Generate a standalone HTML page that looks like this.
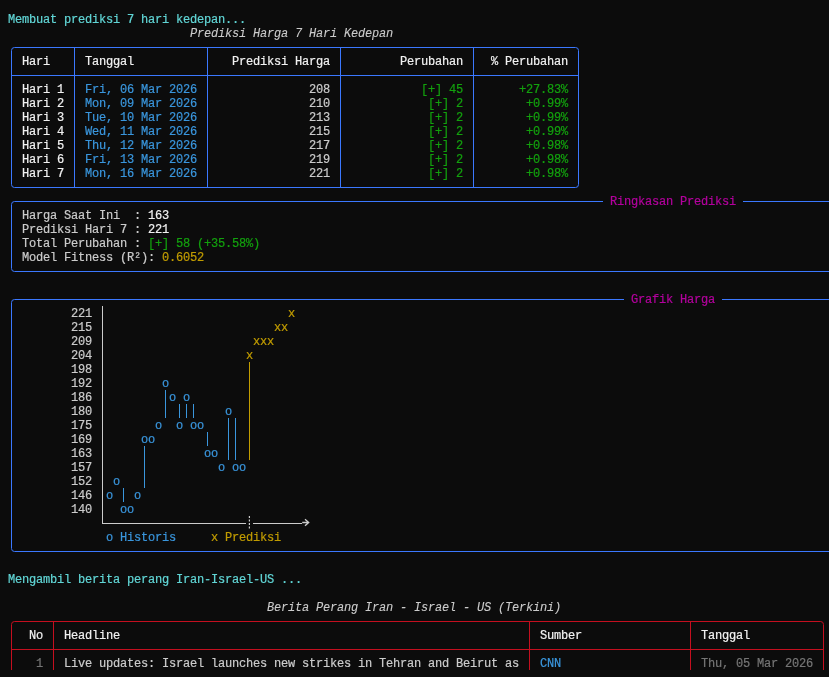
<!DOCTYPE html>
<html lang="id"><head><meta charset="utf-8"><title>Prediksi Harga</title>
<style>
html,body{margin:0;padding:0;background:#0c0c0c;}
body{width:829px;height:677px;overflow:hidden;position:relative;font-family:"Liberation Mono", "DejaVu Sans Mono", monospace;font-size:12.0px;line-height:14px;color:#cccccc;}
#term{position:absolute;left:0;top:0;width:829px;height:677px;overflow:hidden;background:#0c0c0c;}
#term svg{position:absolute;left:0;top:0;}
.r{position:absolute;left:0;height:14px;width:829px;white-space:pre;will-change:transform;}
.r span{position:absolute;top:1.0px;white-space:pre;letter-spacing:-0.2012px;-webkit-text-stroke:0.2px currentColor;}
.r span.b{font-weight:bold;-webkit-text-stroke:0;} .r span.i{font-style:italic;-webkit-text-stroke:0.1px currentColor;}
</style></head><body><div id="term">
<svg width="829" height="677" viewBox="0 0 829 677" shape-rendering="auto">

<path d="M14.5 47.5 H575.5 Q578.5 47.5 578.5 50.5 V184.5 Q578.5 187.5 575.5 187.5 H14.5 Q11.5 187.5 11.5 184.5 V50.5 Q11.5 47.5 14.5 47.5 Z" fill="none" stroke="#3b78ff" stroke-width="1"/>
<rect x="11" y="75" width="568" height="1" fill="#3b78ff"/>
<rect x="74" y="47" width="1" height="141" fill="#3b78ff"/>
<rect x="207" y="47" width="1" height="141" fill="#3b78ff"/>
<rect x="340" y="47" width="1" height="141" fill="#3b78ff"/>
<rect x="473" y="47" width="1" height="141" fill="#3b78ff"/>
<path d="M603 201.5 H14.5 Q11.5 201.5 11.5 204.5 V268.5 Q11.5 271.5 14.5 271.5 H840" fill="none" stroke="#3b78ff" stroke-width="1"/>
<rect x="743" y="201" width="97" height="1" fill="#3b78ff"/>
<path d="M624 299.5 H14.5 Q11.5 299.5 11.5 302.5 V548.5 Q11.5 551.5 14.5 551.5 H840" fill="none" stroke="#3b78ff" stroke-width="1"/>
<rect x="722" y="299" width="118" height="1" fill="#3b78ff"/>
<rect x="102" y="306" width="1" height="210" fill="#cccccc"/>
<rect x="102" y="516" width="1" height="8" fill="#cccccc"/>
<rect x="102" y="523" width="144" height="1" fill="#cccccc"/>
<rect x="253" y="523" width="49" height="1" fill="#cccccc"/>
<path d="M302.2 522.5 H308.5 M305 519.3 L308.7 522.5 L305 525.7" fill="none" stroke="#cccccc" stroke-width="1.3"/>
<path d="M249.4 516 V530" stroke="#cccccc" stroke-width="1.2" stroke-dasharray="2.1 1.4" fill="none"/>
<rect x="165" y="390" width="1" height="28" fill="#3a96dd"/>
<rect x="179" y="404" width="1" height="14" fill="#3a96dd"/>
<rect x="186" y="404" width="1" height="14" fill="#3a96dd"/>
<rect x="193" y="404" width="1" height="14" fill="#3a96dd"/>
<rect x="228" y="418" width="1" height="42" fill="#3a96dd"/>
<rect x="235" y="418" width="1" height="42" fill="#3a96dd"/>
<rect x="207" y="432" width="1" height="14" fill="#3a96dd"/>
<rect x="144" y="446" width="1" height="42" fill="#3a96dd"/>
<rect x="123" y="488" width="1" height="14" fill="#3a96dd"/>
<rect x="249" y="362" width="1" height="98" fill="#c19c00"/>
<path d="M11.5 670 V624.5 Q11.5 621.5 14.5 621.5 H820.5 Q823.5 621.5 823.5 624.5 V670" fill="none" stroke="#c50f1f" stroke-width="1"/>
<rect x="11" y="649" width="813" height="1" fill="#c50f1f"/>
<rect x="53" y="621" width="1" height="49" fill="#c50f1f"/>
<rect x="529" y="621" width="1" height="49" fill="#c50f1f"/>
<rect x="690" y="621" width="1" height="49" fill="#c50f1f"/>
</svg>
<div class="r" style="top:12px">
<span style="left:8px;color:#61d6d6">Membuat prediksi 7 hari kedepan...</span>
</div>
<div class="r" style="top:26px">
<span class="i" style="left:190px;color:#cccccc">Prediksi Harga 7 Hari Kedepan</span>
</div>
<div class="r" style="top:54px">
<span style="left:22px;color:#f2f2f2">Hari</span>
<span style="left:85px;color:#f2f2f2">Tanggal</span>
<span style="left:232px;color:#f2f2f2">Prediksi Harga</span>
<span style="left:400px;color:#f2f2f2">Perubahan</span>
<span style="left:491px;color:#f2f2f2">% Perubahan</span>
</div>
<div class="r" style="top:82px">
<span style="left:22px;color:#f2f2f2">Hari 1</span>
<span style="left:85px;color:#3a96dd">Fri, 06 Mar 2026</span>
<span style="left:309px;color:#cccccc">208</span>
<span style="left:421px;color:#13a10e">[+] 45</span>
<span style="left:519px;color:#13a10e">+27.83%</span>
</div>
<div class="r" style="top:96px">
<span style="left:22px;color:#f2f2f2">Hari 2</span>
<span style="left:85px;color:#3a96dd">Mon, 09 Mar 2026</span>
<span style="left:309px;color:#cccccc">210</span>
<span style="left:428px;color:#13a10e">[+] 2</span>
<span style="left:526px;color:#13a10e">+0.99%</span>
</div>
<div class="r" style="top:110px">
<span style="left:22px;color:#f2f2f2">Hari 3</span>
<span style="left:85px;color:#3a96dd">Tue, 10 Mar 2026</span>
<span style="left:309px;color:#cccccc">213</span>
<span style="left:428px;color:#13a10e">[+] 2</span>
<span style="left:526px;color:#13a10e">+0.99%</span>
</div>
<div class="r" style="top:124px">
<span style="left:22px;color:#f2f2f2">Hari 4</span>
<span style="left:85px;color:#3a96dd">Wed, 11 Mar 2026</span>
<span style="left:309px;color:#cccccc">215</span>
<span style="left:428px;color:#13a10e">[+] 2</span>
<span style="left:526px;color:#13a10e">+0.99%</span>
</div>
<div class="r" style="top:138px">
<span style="left:22px;color:#f2f2f2">Hari 5</span>
<span style="left:85px;color:#3a96dd">Thu, 12 Mar 2026</span>
<span style="left:309px;color:#cccccc">217</span>
<span style="left:428px;color:#13a10e">[+] 2</span>
<span style="left:526px;color:#13a10e">+0.98%</span>
</div>
<div class="r" style="top:152px">
<span style="left:22px;color:#f2f2f2">Hari 6</span>
<span style="left:85px;color:#3a96dd">Fri, 13 Mar 2026</span>
<span style="left:309px;color:#cccccc">219</span>
<span style="left:428px;color:#13a10e">[+] 2</span>
<span style="left:526px;color:#13a10e">+0.98%</span>
</div>
<div class="r" style="top:166px">
<span style="left:22px;color:#f2f2f2">Hari 7</span>
<span style="left:85px;color:#3a96dd">Mon, 16 Mar 2026</span>
<span style="left:309px;color:#cccccc">221</span>
<span style="left:428px;color:#13a10e">[+] 2</span>
<span style="left:526px;color:#13a10e">+0.98%</span>
</div>
<div class="r" style="top:194px">
<span style="left:610px;color:#b4009e">Ringkasan Prediksi</span>
</div>
<div class="r" style="top:208px">
<span style="left:22px;color:#cccccc">Harga Saat Ini  : </span>
<span style="left:148px;color:#f2f2f2">163</span>
</div>
<div class="r" style="top:222px">
<span style="left:22px;color:#cccccc">Prediksi Hari 7 : </span>
<span style="left:148px;color:#f2f2f2">221</span>
</div>
<div class="r" style="top:236px">
<span style="left:22px;color:#cccccc">Total Perubahan : </span>
<span style="left:148px;color:#13a10e">[+] 58 (+35.58%)</span>
</div>
<div class="r" style="top:250px">
<span style="left:22px;color:#cccccc">Model Fitness (R²): </span>
<span style="left:162px;color:#c19c00">0.6052</span>
</div>
<div class="r" style="top:292px">
<span style="left:631px;color:#b4009e">Grafik Harga</span>
</div>
<div class="r" style="top:306px">
<span style="left:71px;color:#cccccc">221</span>
<span style="left:288px;color:#c19c00">x</span>
</div>
<div class="r" style="top:320px">
<span style="left:71px;color:#cccccc">215</span>
<span style="left:274px;color:#c19c00">x</span>
<span style="left:281px;color:#c19c00">x</span>
</div>
<div class="r" style="top:334px">
<span style="left:71px;color:#cccccc">209</span>
<span style="left:253px;color:#c19c00">x</span>
<span style="left:260px;color:#c19c00">x</span>
<span style="left:267px;color:#c19c00">x</span>
</div>
<div class="r" style="top:348px">
<span style="left:71px;color:#cccccc">204</span>
<span style="left:246px;color:#c19c00">x</span>
</div>
<div class="r" style="top:362px">
<span style="left:71px;color:#cccccc">198</span>
</div>
<div class="r" style="top:376px">
<span style="left:71px;color:#cccccc">192</span>
<span style="left:162px;color:#3a96dd">o</span>
</div>
<div class="r" style="top:390px">
<span style="left:71px;color:#cccccc">186</span>
<span style="left:169px;color:#3a96dd">o</span>
<span style="left:183px;color:#3a96dd">o</span>
</div>
<div class="r" style="top:404px">
<span style="left:71px;color:#cccccc">180</span>
<span style="left:225px;color:#3a96dd">o</span>
</div>
<div class="r" style="top:418px">
<span style="left:71px;color:#cccccc">175</span>
<span style="left:155px;color:#3a96dd">o</span>
<span style="left:176px;color:#3a96dd">o</span>
<span style="left:190px;color:#3a96dd">o</span>
<span style="left:197px;color:#3a96dd">o</span>
</div>
<div class="r" style="top:432px">
<span style="left:71px;color:#cccccc">169</span>
<span style="left:141px;color:#3a96dd">o</span>
<span style="left:148px;color:#3a96dd">o</span>
</div>
<div class="r" style="top:446px">
<span style="left:71px;color:#cccccc">163</span>
<span style="left:204px;color:#3a96dd">o</span>
<span style="left:211px;color:#3a96dd">o</span>
</div>
<div class="r" style="top:460px">
<span style="left:71px;color:#cccccc">157</span>
<span style="left:218px;color:#3a96dd">o</span>
<span style="left:232px;color:#3a96dd">o</span>
<span style="left:239px;color:#3a96dd">o</span>
</div>
<div class="r" style="top:474px">
<span style="left:71px;color:#cccccc">152</span>
<span style="left:113px;color:#3a96dd">o</span>
</div>
<div class="r" style="top:488px">
<span style="left:71px;color:#cccccc">146</span>
<span style="left:106px;color:#3a96dd">o</span>
<span style="left:134px;color:#3a96dd">o</span>
</div>
<div class="r" style="top:502px">
<span style="left:71px;color:#cccccc">140</span>
<span style="left:120px;color:#3a96dd">o</span>
<span style="left:127px;color:#3a96dd">o</span>
</div>
<div class="r" style="top:530px">
<span style="left:106px;color:#3a96dd">o</span>
<span style="left:120px;color:#3a96dd">Historis</span>
<span style="left:211px;color:#c19c00">x</span>
<span style="left:225px;color:#c19c00">Prediksi</span>
</div>
<div class="r" style="top:572px">
<span style="left:8px;color:#61d6d6">Mengambil berita perang Iran-Israel-US ...</span>
</div>
<div class="r" style="top:600px">
<span class="i" style="left:267px;color:#cccccc">Berita Perang Iran - Israel - US (Terkini)</span>
</div>
<div class="r" style="top:628px">
<span style="left:29px;color:#f2f2f2">No</span>
<span style="left:64px;color:#f2f2f2">Headline</span>
<span style="left:540px;color:#f2f2f2">Sumber</span>
<span style="left:701px;color:#f2f2f2">Tanggal</span>
</div>
<div class="r" style="top:656px">
<span style="left:36px;color:#767676">1</span>
<span style="left:64px;color:#cccccc">Live updates: Israel launches new strikes in Tehran and Beirut as</span>
<span style="left:540px;color:#3a96dd">CNN</span>
<span style="left:701px;color:#767676">Thu, 05 Mar 2026</span>
</div>
</div></body></html>
